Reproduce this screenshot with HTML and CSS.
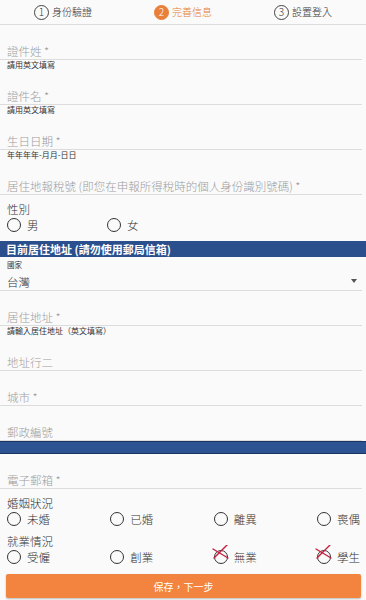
FILE: index.html
```html
<!DOCTYPE html>
<html lang="zh-Hant">
<head>
<meta charset="utf-8">
<title>完善信息</title>
<link rel="stylesheet" href="styles.css">
</head>
<body>
<div class="steps">
  <div class="step"><span class="num">1</span><span class="step-text">身份驗證</span></div>
  <div class="step active"><span class="num">2</span><span class="step-text">完善信息</span></div>
  <div class="step"><span class="num">3</span><span class="step-text">設置登入</span></div>
</div>
<div class="form">
  <div class="field"><div class="input">證件姓 *</div><div class="hint">請用英文填寫</div></div>
  <div class="field"><div class="input">證件名 *</div><div class="hint">請用英文填寫</div></div>
  <div class="field"><div class="input">生日日期 *</div><div class="hint">年年年年-月月-日日</div></div>
  <div class="field"><div class="input">居住地報稅號 (即您在申報所得稅時的個人身份識別號碼) *</div></div>
  <div class="group gender-group">
    <div class="group-label">性別</div>
    <div class="radios two">
      <div class="radio"><span class="circle"></span><span>男</span></div>
      <div class="radio"><span class="circle"></span><span>女</span></div>
    </div>
  </div>
  <div class="section-bar">目前居住地址 (請勿使用郵局信箱)</div>
  <div class="select-field">
    <div class="select-label">國家</div>
    <div class="select"><span>台灣</span><span class="caret"></span></div>
  </div>
  <div class="field"><div class="input">居住地址 *</div><div class="hint">請輸入居住地址（英文填寫）</div></div>
  <div class="field"><div class="input">地址行二</div></div>
  <div class="field"><div class="input">城市 *</div></div>
  <div class="field"><div class="input">郵政編號</div></div>
  <div class="divider-bar"></div>
  <div class="field"><div class="input">電子郵箱 *</div></div>
  <div class="group">
    <div class="group-label">婚姻狀況</div>
    <div class="radios four">
      <div class="radio"><span class="circle"></span><span>未婚</span></div>
      <div class="radio"><span class="circle"></span><span>已婚</span></div>
      <div class="radio"><span class="circle"></span><span>離異</span></div>
      <div class="radio"><span class="circle"></span><span>喪偶</span></div>
    </div>
  </div>
  <div class="group">
    <div class="group-label">就業情況</div>
    <div class="radios four">
      <div class="radio"><span class="circle"></span><span>受僱</span></div>
      <div class="radio"><span class="circle"></span><span>創業</span></div>
      <div class="radio"><span class="circle"><svg class="cross" width="17" height="15" viewBox="0 0 17 15"><line x1="1" y1="4" x2="16" y2="13"/><line x1="15" y1="0" x2="2" y2="13"/></svg></span><span>無業</span></div>
      <div class="radio"><span class="circle"><svg class="cross" width="17" height="15" viewBox="0 0 17 15"><line x1="1" y1="4" x2="16" y2="13"/><line x1="15" y1="0" x2="2" y2="13"/></svg></span><span>學生</span></div>
    </div>
  </div>
  <button class="submit" type="button">保存，下一步</button>
</div>
</body>
</html>
```
FILE: styles.css
```css
html, body {
  margin: 0;
  padding: 0;
  background: #fafafa;
}
body {
  font-family: "Noto Sans CJK TC", "Noto Sans", sans-serif;
  font-weight: 300;
  color: #333;
  width: 366px;
  height: 600px;
  overflow: hidden;
}
.steps {
  height: 24px;
  border-bottom: 1px solid #dcdcdc;
  display: flex;
  justify-content: center;
  align-items: center;
  gap: 62px;
}
.step {
  display: flex;
  align-items: center;
  gap: 3px;
  font-size: 10px;
  line-height: 14px;
  color: #333;
}
.num {
  width: 15px;
  height: 15px;
  box-sizing: border-box;
  border: 1px solid #444;
  border-radius: 50%;
  display: flex;
  align-items: center;
  justify-content: center;
  font-size: 10px;
  line-height: 1;
}
.step.active .num {
  background: #e8803a;
  border-color: #e8803a;
  color: #fff;
}
.step.active .step-text {
  color: #e07c38;
}
.form {
  display: flex;
  flex-direction: column;
}
.field {
  padding-top: 18px;
  margin-right: 4px;
}
.input {
  height: 16px;
  line-height: 16px;
  font-size: 11.5px;
  color: #9c9c9c;
  padding-left: 7px;
  border-bottom: 1px solid #dcdcdc;
  white-space: nowrap;
}
.hint {
  height: 10px;
  line-height: 10px;
  font-size: 8px;
  font-weight: 400;
  color: #333;
  padding-left: 7px;
}
.group {
  padding: 6px 6px 0 7px;
}
.gender-group {
  padding-bottom: 8px;
}
.group-label {
  font-size: 11.5px;
  line-height: 16px;
  color: #333;
}
.radios {
  display: flex;
  height: 16px;
  align-items: center;
}
.radios.four {
  justify-content: space-between;
}
.radios.two .radio {
  width: 100px;
}
.radio {
  display: flex;
  align-items: center;
  gap: 6px;
  font-size: 11.5px;
  line-height: 16px;
  color: #333;
}
.circle {
  position: relative;
  width: 14px;
  height: 14px;
  box-sizing: border-box;
  border: 1.5px solid #333;
  border-radius: 50%;
  flex: none;
}
.cross {
  position: absolute;
  left: -3px;
  top: -6px;
  stroke: #c4203f;
  stroke-width: 1.4;
  stroke-linecap: round;
}
.section-bar {
  background: #2b4f8c;
  color: #fff;
  font-weight: bold;
  font-size: 11px;
  height: 16px;
  line-height: 16px;
  padding-left: 6px;
}
.select-field {
  margin-right: 4px;
  padding-top: 2px;
}
.select-label {
  font-size: 7.5px;
  font-weight: 400;
  line-height: 12px;
  color: #333;
  padding-left: 7px;
}
.select {
  margin-top: 3px;
  height: 16px;
  line-height: 16px;
  font-size: 11.5px;
  color: #333;
  padding: 0 5px 0 7px;
  border-bottom: 1px solid #dcdcdc;
  display: flex;
  justify-content: space-between;
  align-items: center;
}
.caret {
  width: 0;
  height: 0;
  border-left: 3.5px solid transparent;
  border-right: 3.5px solid transparent;
  border-top: 4px solid #555;
  margin-top: -2px;
}
.divider-bar {
  height: 11px;
  background: #2d5492;
  border-top: 1px solid #1b3563;
  border-bottom: 1px solid #1b3563;
}
.submit {
  margin: 9px 5px 0 6px;
  height: 24px;
  border: none;
  border-radius: 2px;
  background: #f3843f;
  color: #fff;
  font-family: "Noto Sans CJK TC", "Noto Sans", sans-serif;
  font-size: 10px;
  font-weight: 400;
  box-shadow: 0 1px 2px rgba(0, 0, 0, 0.25);
  padding: 0;
}
```
